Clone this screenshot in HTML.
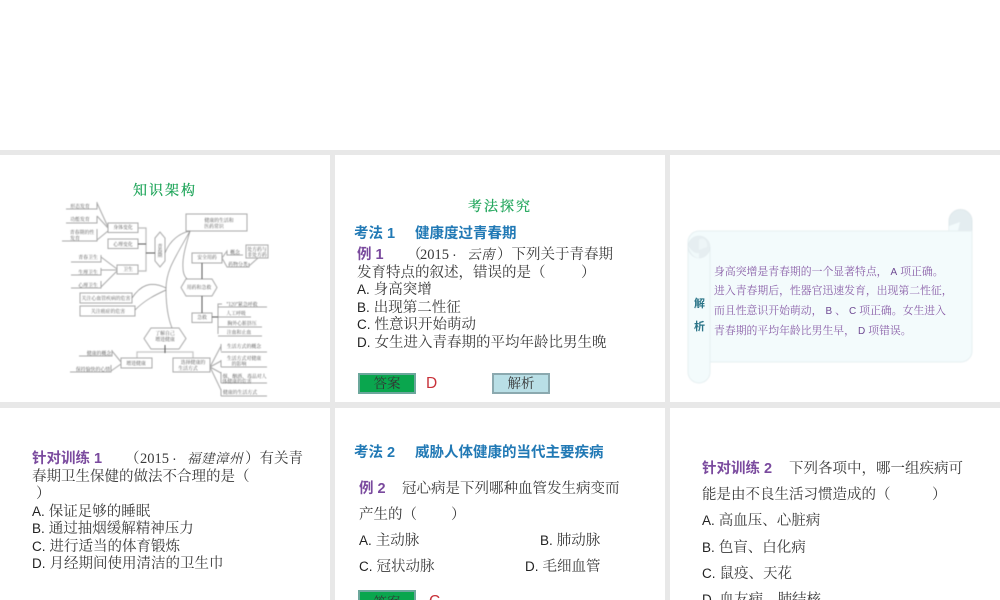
<!DOCTYPE html>
<html>
<head>
<meta charset="utf-8">
<style>
html,body{margin:0;padding:0;background:#fff;width:1000px;height:600px;overflow:hidden}
body{font-family:"Liberation Sans","Noto Serif CJK SC",sans-serif}
#w{position:absolute;left:0;top:0;width:1000px;height:600px;overflow:hidden;background:#e8e8e8}
.s{position:absolute;background:#fff}
#t{position:absolute;left:0;top:1px;width:1000px;height:599px;filter:blur(.35px)}
.l{position:absolute;line-height:18px;height:18px;white-space:nowrap;font-size:14.5px;color:#3a3a3a}
.l i{font-style:normal;color:#222;font-size:13.5px}
.h{color:#2179b5;font-weight:bold;font-family:"Liberation Sans","Noto Sans CJK SC",sans-serif;font-size:14.5px}
.p{color:#7a4a9e;font-weight:bold;font-family:"Liberation Sans","Noto Sans CJK SC",sans-serif;font-size:14.5px}
.g{color:#1fa55a;font-size:14px;letter-spacing:2px;-webkit-text-stroke:.25px #1fa55a}
.y{font-family:"Liberation Serif",serif;font-size:14.5px}
.k{font-style:italic;font-size:13.5px;letter-spacing:.5px}
.btn{position:absolute;width:54px;height:17px;line-height:17px;text-align:center;font-size:13.5px;color:#333}
.b1{background:#0aa64e;border:2px solid #6ca79c}
.b2{background:#b9dfe6;border:2px solid #8ba9af}
.r{color:#c8323a;font-size:15.5px;font-family:"Liberation Sans",sans-serif}
.v{font-size:10.85px;color:#8a5fa8}
.v i{color:#6f4a93;font-size:10px}
.j{font-size:11px;font-weight:bold;color:#2a7488;font-family:"Noto Sans CJK SC",sans-serif}
</style>
</head>
<body>
<div id="w">
<div class="s" style="left:0;top:0;width:1000px;height:150px"></div>
<div class="s" style="left:0;top:155px;width:330px;height:247px"></div>
<div class="s" style="left:335px;top:155px;width:330px;height:247px"></div>
<div class="s" style="left:670px;top:155px;width:330px;height:247px"></div>
<div class="s" style="left:0;top:408px;width:330px;height:192px"></div>
<div class="s" style="left:335px;top:408px;width:330px;height:192px"></div>
<div class="s" style="left:670px;top:408px;width:330px;height:192px"></div>

<!-- mind map and scroll -->
<svg width="1000" height="600" viewBox="0 0 1000 600" style="position:absolute;left:0;top:0;filter:blur(.4px)">
<g fill="none" stroke="#a8a8a8" stroke-width="1">
  <path d="M66 209H97V202M66 223H97V216M62 241H97V229"/>
  <path d="M97 203L108 227M97 216L108 228M97 240L108 231"/>
  <path d="M71 262H101V255M71 275H101V268M71 288H101V281"/>
  <path d="M101 257L117 269M101 270L117 270M101 287L117 271"/>
  <rect x="108" y="223" width="30" height="9.500" fill="#fff"/>
  <rect x="108" y="239" width="30" height="9.500" fill="#fff"/>
  <rect x="117" y="265" width="21" height="9" fill="#fff"/>
  <path d="M138 228H146V271H138" stroke="#bbb" stroke-width="1.200"/>
  <path d="M155 238L160 232L165 238V261L160 267L155 261Z" fill="#fff"/>
  <rect x="186" y="214" width="61" height="17" fill="#fff"/>
  <rect x="192" y="253" width="30" height="10" fill="#fff"/>
  <path d="M222 258L227 251V255H243M222 258L227 267H249V263"/>
  <rect x="246" y="245" width="22" height="13" fill="#fff"/>
  <path d="M249 266L258 258"/>
  <path d="M186 279H212L217 287.500L212 296H186L181 287.500Z" fill="#fff"/>
  <rect x="192" y="313" width="20" height="9.500" fill="#fff"/>
  <path d="M218 334V304H222M218 307H267M218 317H251M218 327H262M218 336H262"/>
  <rect x="80" y="293" width="52" height="10" fill="#fff"/>
  <rect x="80" y="306" width="55" height="10" fill="#fff"/>
  <path d="M151 328H179L186 338.500L179 349H151L144 338.500Z" fill="#fff"/>
  <path d="M137 358V352H193V358" stroke="#c4c4c4" stroke-width="1.200"/>
  <rect x="121" y="358" width="31" height="10" fill="#fff"/>
  <rect x="173" y="358" width="37" height="14" fill="#fff"/>
  <path d="M79 356H112V350M70 372H111V365M112 351L121 362M111 371L121 364"/>
  <path d="M221 352H267M221 367H267M221 383H267M221 396H267"/>
  <path d="M221 344V351M221 360V367M221 372V383M221 389V396"/>
  <path d="M210 367L221 346M210 367L221 361M210 367L221 373M210 367L221 390"/>
</g>
<g fill="none" stroke="#888" stroke-width=".7">
  <path d="M165 253C170 240 180 233 190 231"/>
  <path d="M190 231C175 258 166 270 166 289C166 305 168 318 172 328"/>
  <path d="M190 231C186 245 182 258 183 268C183 274 185 277 187 279"/>
  <path d="M132 298C140 286 150 280 166 288"/>
  <path d="M135 310C145 300 155 295 166 290"/>
</g>
<g fill="none" stroke="#555" stroke-width="1">
  <path d="M138 244H146M146 253H155"/>
  <path d="M202 263V279M202 296V313M212 317H218"/>
  <path d="M165 345V353"/>
</g>
<g font-size="4.900" fill="#555" font-family="'Noto Serif CJK SC',serif" text-anchor="middle">
  <text x="80" y="208">形态发育</text>
  <text x="80" y="221">功能发育</text>
  <text x="82" y="234">青春期的性</text>
  <text x="75" y="240">发育</text>
  <text x="123" y="229">身体变化</text>
  <text x="123" y="246">心理变化</text>
  <text x="128" y="271">卫生</text>
  <text x="88" y="259">青春卫生</text>
  <text x="88" y="274">生理卫生</text>
  <text x="88" y="287">心理卫生</text>
  <text x="106" y="300">关注心血管疾病的危害</text>
  <text x="108" y="313">关注癌症的危害</text>
  <text x="219" y="222">健康的生活和</text>
  <text x="214" y="228">医药常识</text>
  <text x="207" y="259">安全用药</text>
  <text x="235" y="254">概念</text>
  <text x="238" y="266">药物分类</text>
  <text x="257" y="251">处方药与</text>
  <text x="257" y="256.500">非处方药</text>
  <text x="199" y="289">用药和急救</text>
  <text x="202" y="319">急救</text>
  <text x="242" y="306">"120"紧急呼救</text>
  <text x="236" y="315">人工呼吸</text>
  <text x="242" y="325">胸外心脏挤压</text>
  <text x="239" y="334">注血和止血</text>
  <text x="165" y="335">了解自己</text>
  <text x="165" y="341">增进健康</text>
  <text x="136" y="365">增进健康</text>
  <text x="193" y="364">选择健康的</text>
  <text x="188" y="370">生活方式</text>
  <text x="99" y="355">健康的概念</text>
  <text x="93" y="371">保持愉快的心情</text>
  <text x="244" y="348">生活方式的概念</text>
  <text x="244" y="360">生活方式对健康</text>
  <text x="239" y="365.500">的影响</text>
  <text x="244.500" y="378">烟、酗酒、毒品对人</text>
  <text x="237" y="383">体健康的危害</text>
  <text x="240" y="394">健康的生活方式</text>
  <text x="160" y="248">青</text><text x="160" y="252.500">春</text><text x="160" y="257">期</text>
</g>
<!-- scroll -->
<g>
  <path d="M949 231V221A11.500 11.500 0 1 1 972 221V231Z" fill="#e4edf0" stroke="#dfe8eb"/>
  <path d="M949 231V226L960 222L958 231Z" fill="#f3fbfc"/>
  <path d="M699 231H972V351A11 11 0 0 1 961 362H710V372A11 11 0 0 1 688 372V242A11 11 0 0 1 699 231Z" fill="#f3fbfc" stroke="#e6eff1" stroke-width="1"/>
  <path d="M710 362V247" stroke="#e6eff1" fill="none"/>
  <circle cx="699" cy="247" r="11" fill="#e6eef1" stroke="#e0e9ec" stroke-width=".5"/>
  <path d="M688 246C692 251 695 254 699 253L699 258C694 258 690 253 688 246Z" fill="#f3fbfc" opacity=".8"/>
  <path d="M699 240C702 236 708 240 707 247L699 250Z" fill="#f3fbfc" opacity=".55"/>
</g>
</svg>

<div id="t">
  <!-- slide 1 title -->
  <div class="l g" style="left:133px;top:180px">知识架构</div>

  <!-- slide 2 -->
  <div class="l g" style="left:468px;top:196px">考法探究</div>
  <div class="l h" style="left:354px;top:224px">考法 1</div>
  <div class="l h" style="left:415px;top:224px">健康度过青春期</div>
  <div class="l p" style="left:357px;top:245px">例 1</div>
  <div class="l" style="left:407px;top:245px">（</div>
  <div class="l y" style="left:420px;top:245px">2015</div>
  <div class="l" style="left:452px;top:245px">·</div>
  <div class="l k" style="left:467px;top:245px">云南</div>
  <div class="l" style="left:497px;top:245px">）下列关于青春期</div>
  <div class="l" style="left:357px;top:263px">发育特点的叙述，错误的是（</div>
  <div class="l" style="left:581px;top:263px">）</div>
  <div class="l" style="left:357px;top:280px"><i>A.</i> 身高突增</div>
  <div class="l" style="left:357px;top:298px"><i>B.</i> 出现第二性征</div>
  <div class="l" style="left:357px;top:315px"><i>C.</i> 性意识开始萌动</div>
  <div class="l" style="left:357px;top:333px"><i>D.</i> 女生进入青春期的平均年龄比男生晚</div>
  <div class="btn b1" style="left:358px;top:372px">答案</div>
  <div class="l r" style="left:426px;top:374px">D</div>
  <div class="btn b2" style="left:492px;top:372px">解析</div>

  <!-- slide 3 -->
  <div class="l j" style="left:694px;top:293px">解</div>
  <div class="l j" style="left:694px;top:316px">析</div>
  <div class="l v" style="left:714px;top:261.500px">身高突增是青春期的一个显著特点， <i>A</i> 项正确。</div>
  <div class="l v" style="left:714px;top:281px">进入青春期后，性器官迅速发育，出现第二性征，</div>
  <div class="l v" style="left:714px;top:301px">而且性意识开始萌动， <i>B</i> 、 <i>C</i> 项正确。女生进入</div>
  <div class="l v" style="left:714px;top:321px">青春期的平均年龄比男生早， <i>D</i> 项错误。</div>

  <!-- slide 4 -->
  <div class="l p" style="left:32px;top:449px">针对训练 1</div>
  <div class="l" style="left:125px;top:449px">（</div>
  <div class="l y" style="left:140px;top:449px">2015</div>
  <div class="l" style="left:172px;top:449px">·</div>
  <div class="l k" style="left:187px;top:449px">福建漳州</div>
  <div class="l" style="left:245px;top:449px">）有关青</div>
  <div class="l" style="left:32px;top:467px">春期卫生保健的做法不合理的是（</div>
  <div class="l" style="left:32px;top:484px">&nbsp;）</div>
  <div class="l" style="left:32px;top:502px"><i>A.</i> 保证足够的睡眠</div>
  <div class="l" style="left:32px;top:519px"><i>B.</i> 通过抽烟缓解精神压力</div>
  <div class="l" style="left:32px;top:537px"><i>C.</i> 进行适当的体育锻炼</div>
  <div class="l" style="left:32px;top:554px"><i>D.</i> 月经期间使用清洁的卫生巾</div>

  <!-- slide 5 -->
  <div class="l h" style="left:354px;top:443px">考法 2</div>
  <div class="l h" style="left:415px;top:443px">威胁人体健康的当代主要疾病</div>
  <div class="l p" style="left:359px;top:479px">例 2</div>
  <div class="l" style="left:402px;top:479px">冠心病是下列哪种血管发生病变而</div>
  <div class="l" style="left:359px;top:505px">产生的（</div>
  <div class="l" style="left:451px;top:505px">）</div>
  <div class="l" style="left:359px;top:531px"><i>A.</i> 主动脉</div>
  <div class="l" style="left:540px;top:531px"><i>B.</i> 肺动脉</div>
  <div class="l" style="left:359px;top:557px"><i>C.</i> 冠状动脉</div>
  <div class="l" style="left:525px;top:557px"><i>D.</i> 毛细血管</div>
  <div class="btn b1" style="left:358px;top:589px;line-height:21px">答案</div>
  <div class="l r" style="left:429px;top:592px">C</div>

  <!-- slide 6 -->
  <div class="l p" style="left:702px;top:459px">针对训练 2</div>
  <div class="l" style="left:789px;top:459px">下列各项中，哪一组疾病可</div>
  <div class="l" style="left:702px;top:485px">能是由不良生活习惯造成的（</div>
  <div class="l" style="left:932px;top:485px">）</div>
  <div class="l" style="left:702px;top:511px"><i>A.</i> 高血压、心脏病</div>
  <div class="l" style="left:702px;top:538px"><i>B.</i> 色盲、白化病</div>
  <div class="l" style="left:702px;top:564px"><i>C.</i> 鼠疫、天花</div>
  <div class="l" style="left:702px;top:590px"><i>D.</i> 血友病、肺结核</div>
</div>
</div>
</body>
</html>
